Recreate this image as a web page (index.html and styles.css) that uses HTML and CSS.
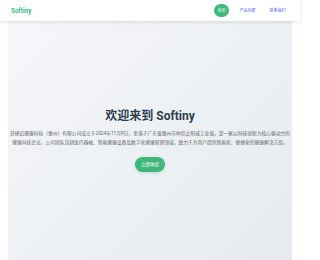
FILE: index.html
```html
<!DOCTYPE html>
<html lang="zh-CN">
<head>
<meta charset="utf-8">
<title>Softiny</title>
<link rel="stylesheet" href="styles.css">
</head>
<body>
<div class="page">
  <header class="topbar">
    <div class="logo">Softiny</div>
    <nav class="nav">
      <a class="nav-item active" href="#">首页</a>
      <a class="nav-item" href="#">产品功能</a>
      <a class="nav-item" href="#">联系我们</a>
    </nav>
  </header>
  <main class="main">
    <section class="hero">
      <h1 class="hero-title">欢迎来到 Softiny</h1>
      <p class="hero-text">舒捷迈健康科技（惠州）有限公司成立于2024年11月8日，坐落于广东省惠州市仲恺太阳城工业城，是一家以科技创新为核心驱动力的健康科技企业。公司团队深耕医疗器械、智能健康设备及数字化健康管理领域，致力于为用户提供智能化、便捷化的健康解决方案。</p>
      <a class="hero-btn" href="#">立即体验</a>
    </section>
  </main>
</div>
</body>
</html>
```

FILE: styles.css
```css
html, body {
  margin: 0;
  padding: 0;
  background: #ffffff;
  font-family: Roboto, "Noto Sans CJK SC", sans-serif;
}

.page {
  width: 300px;
}

.topbar {
  position: relative;
  z-index: 2;
  height: 21px;
  background: #ffffff;
  box-shadow: 0 1px 4px rgba(0, 0, 0, 0.12);
  display: flex;
  align-items: center;
  justify-content: space-between;
  padding: 0 11px 0 11px;
}

.logo {
  font-size: 6.4px;
  font-weight: bold;
  color: #42b983;
}

.nav {
  display: flex;
  align-items: center;
  gap: 7px;
}

.nav-item {
  font-size: 4px;
  line-height: 5px;
  padding: 4px 3.5px;
  border-radius: 7px;
  color: #5757e0;
  text-decoration: none;
}

.nav-item.active {
  background: #3db87a;
  color: #ffffff;
}

.main {
  margin: 0 8px;
}

.hero {
  height: 239px;
  background: linear-gradient(135deg, #f5f7fa 0%, #e6eaee 100%);
  display: flex;
  flex-direction: column;
  align-items: center;
  padding: 88px 2px 0;
  box-sizing: border-box;
  text-align: center;
}

.hero-title {
  margin: 0 0 5px;
  font-size: 12px;
  line-height: 15px;
  font-weight: bold;
  color: #2c3e50;
}

.hero-text {
  margin: 0 0 10px;
  font-size: 4.75px;
  line-height: 9px;
  color: #666666;
}

.hero-btn {
  display: inline-block;
  font-size: 4.5px;
  line-height: 15px;
  padding: 0 6px;
  border-radius: 8px;
  background: #3db87a;
  color: #ffffff;
  text-decoration: none;
  box-shadow: 0 1px 3px rgba(61, 184, 122, 0.3);
}
```
